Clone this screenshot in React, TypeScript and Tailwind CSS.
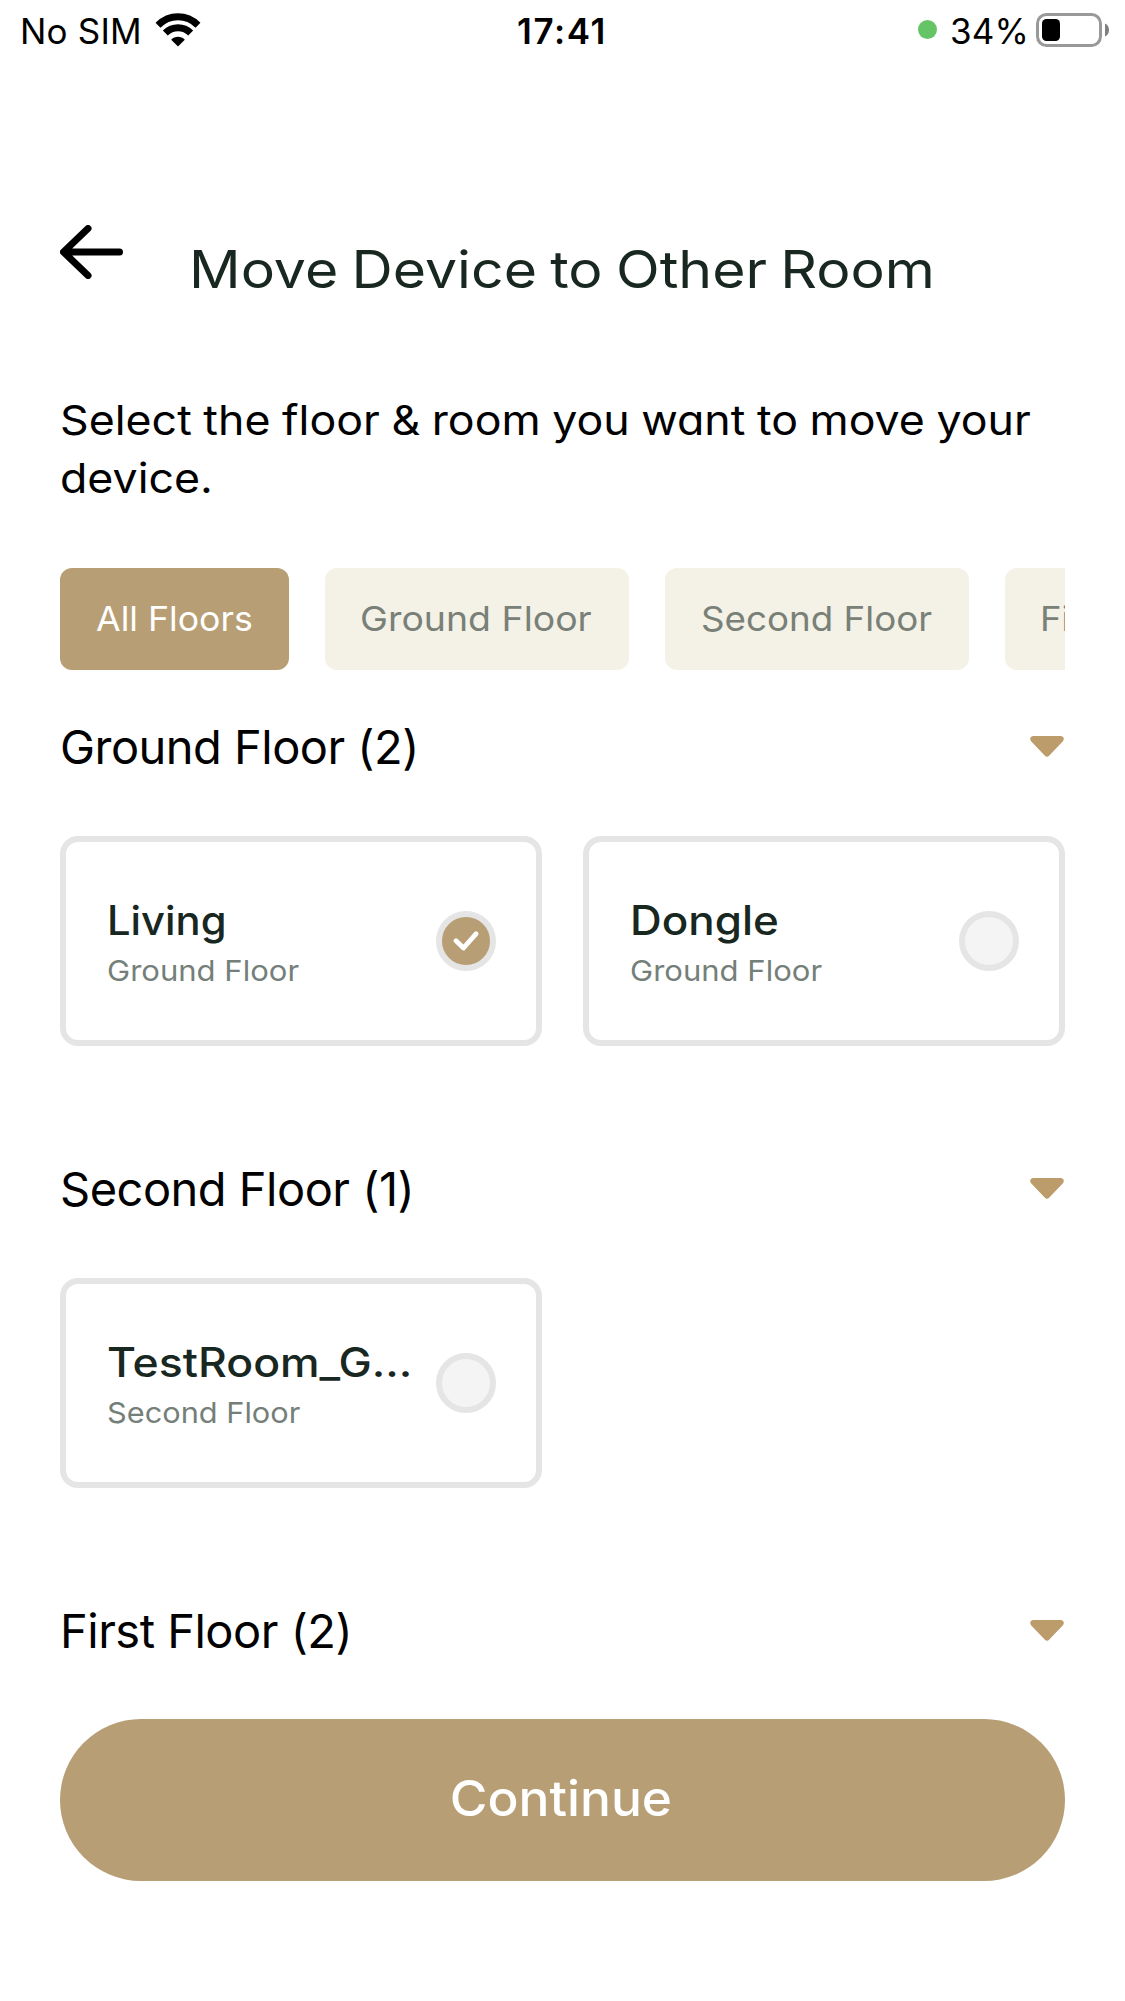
const floors = [
  { label: "All Floors", chip: "w-[229px] pl-[36px] bg-[#b79e74] text-white", stretch: "scale-x-[1.035]" },
  { label: "Ground Floor", chip: "w-[304px] pl-[35px] bg-[#f4f1e6] text-[#788077]", stretch: "scale-x-[1.085]" },
  { label: "Second Floor", chip: "w-[304px] pl-[36px] bg-[#f4f1e6] text-[#788077]", stretch: "scale-x-[1.065]" },
  { label: "First Floor", chip: "w-[260px] pl-[35px] bg-[#f4f1e6] text-[#788077]", stretch: "scale-x-[1.06]" },
];

function StatusBar() {
  return (
    <header className="flex h-[63px] items-center text-[35px] leading-[63px]">
      <div className="flex flex-1 items-center pl-[20px]">
        <span className="w-[135px] whitespace-nowrap tracking-[0.2px]">No SIM</span>
        <svg className="mb-1 h-[34px] w-[46px]" viewBox="0 0 46 34" fill="none">
          <path d="M3 12.2C14.5 1 31.5 1 43 12.2" stroke="#000" strokeWidth="7" />
          <path d="M10.3 20C17.5 13 28.5 13 35.7 20" stroke="#000" strokeWidth="7" />
          <path d="M16.2 26.7C20 22.9 26 22.9 29.8 26.7L23 33.5Z" fill="#000" />
        </svg>
      </div>
      <span className="mr-[4px] -ml-[1px] font-semibold tracking-[1.6px]">17:41</span>
      <div className="flex flex-1 items-center justify-end pr-[16px]">
        <span className="mb-1 mr-[13px] size-[19px] rounded-full bg-[#65c466]" />
        <span className="mr-[7px] tracking-[0.1px]">34%</span>
        <svg className="mb-[3px] h-[34px] w-[73px]" viewBox="0 0 73 34">
          <rect x="1.5" y="1.5" width="63" height="31" rx="9" fill="none" stroke="#999" strokeWidth="3" />
          <rect x="6" y="6" width="18" height="22" rx="4.5" fill="#000" />
          <path d="M69 10.5C71.5 11.5 73 14 73 17S71.5 22.5 69 23.5Z" fill="#808080" />
        </svg>
      </div>
    </header>
  );
}

function FloorHeader({ title, spacing }: { title: string; spacing: string }) {
  return (
    <div className="flex h-[60px] items-center justify-between">
      <h2 className={`text-[47px] leading-[60px] ${spacing}`}>{title}</h2>
      <svg className="mr-px mb-[2px] h-[21px] w-[34px]" viewBox="0 0 34 21" fill="#bd9c6b">
        <path d="M3.5 0H30.5C33.8 0 34.8 3.4 32.7 5.5L19.3 19.4C17.7 21.1 16.3 21.1 14.7 19.4L1.3 5.5C-.8 3.4.2 0 3.5 0Z" />
      </svg>
    </div>
  );
}

type Room = { name: string; nameStyle: string; floor: string; floorStyle: string; selected?: boolean };

function RoomCard({ name, nameStyle, floor, floorStyle, selected }: Room) {
  return (
    <button className="flex h-[210px] w-[482px] items-center justify-between rounded-[18px] border-[6px] border-[#e5e5e5] bg-white pr-[40px] pl-[41px] text-left">
      <span className="flex w-[300px] flex-col items-start gap-1 pt-[6px] whitespace-nowrap">
        <span className={`origin-left text-[40.5px] leading-[50px] font-medium text-[#18271f] ${nameStyle}`}>{name}</span>
        <span className={`origin-left text-[29px] leading-[42px] text-[#757f79] ${floorStyle}`}>{floor}</span>
      </span>
      <span
        className={`flex size-[60px] shrink-0 items-center justify-center rounded-full border-[6px] border-[#e5e5e5] ${
          selected ? "bg-[#b79e74]" : "bg-[#f4f4f4]"
        }`}
      >
        {selected && (
          <svg className="h-[20px] w-[26px]" viewBox="0 0 26 20" fill="none">
            <path d="M3 9.8L10.5 17L23 2.8" stroke="#fff" strokeWidth="4.8" strokeLinecap="round" strokeLinejoin="round" />
          </svg>
        )}
      </span>
    </button>
  );
}

export default function App() {
  return (
    <div className="h-[2001px] w-[1125px] overflow-hidden bg-white font-['Inter',sans-serif] text-black [font-feature-settings:'cv11']">
      <StatusBar />
      <main className="px-[60px]">
        <div className="flex pt-[162px]">
          <svg className="h-[54px] w-[63px]" viewBox="0 0 63 54" fill="none">
            <path d="M59.5 27H4M28 3.5L3.5 27L28 50.5" stroke="#000" strokeWidth="7" strokeLinecap="round" strokeLinejoin="round" />
          </svg>
          <h1 className="mt-[15px] ml-[66px] origin-left scale-x-[1.1] text-[52px] leading-[60px] [word-spacing:-2.6px] whitespace-nowrap text-[#18271f]">
            Move Device to Other Room
          </h1>
        </div>
        <p className="mt-[91px] w-[925px] origin-left scale-x-[1.09] text-[41px] leading-[58px] [word-spacing:-0.9px]">
          Select the floor &amp; room you want to move your device.
        </p>
        <nav className="mt-[61px] flex gap-[36px] overflow-hidden">
          {floors.map((f) => (
            <button
              key={f.label}
              className={`h-[102px] shrink-0 rounded-[12px] text-left text-[34.5px] whitespace-nowrap ${f.chip}`}
            >
              <span className={`inline-block origin-left ${f.stretch}`}>{f.label}</span>
            </button>
          ))}
        </nav>

        <section className="mt-[47px]">
          <FloorHeader title="Ground Floor (2)" spacing="tracking-[-0.52px]" />
          <div className="mt-[59px] flex justify-between">
            <RoomCard name="Living" nameStyle="scale-x-[1.03]" floor="Ground Floor" floorStyle="scale-x-[1.07]" selected />
            <RoomCard name="Dongle" nameStyle="scale-x-[1.085]" floor="Ground Floor" floorStyle="scale-x-[1.07]" />
          </div>
        </section>
        <section className="mt-[113px]">
          <FloorHeader title="Second Floor (1)" spacing="tracking-[-0.5px]" />
          <div className="mt-[59px] flex">
            <RoomCard name="TestRoom_G…" nameStyle="scale-x-[1.1]" floor="Second Floor" floorStyle="scale-x-[1.06]" />
          </div>
        </section>
        <section className="mt-[113px]">
          <FloorHeader title="First Floor (2)" spacing="tracking-[-0.5px]" />
        </section>

        <button className="mt-[58px] flex h-[162px] w-full items-center justify-center rounded-full bg-[#b79e74] pr-[3px] pb-[3px] text-[49px] font-medium text-white">
          <span className="scale-x-[1.05]">Continue</span>
        </button>
      </main>
    </div>
  );
}
